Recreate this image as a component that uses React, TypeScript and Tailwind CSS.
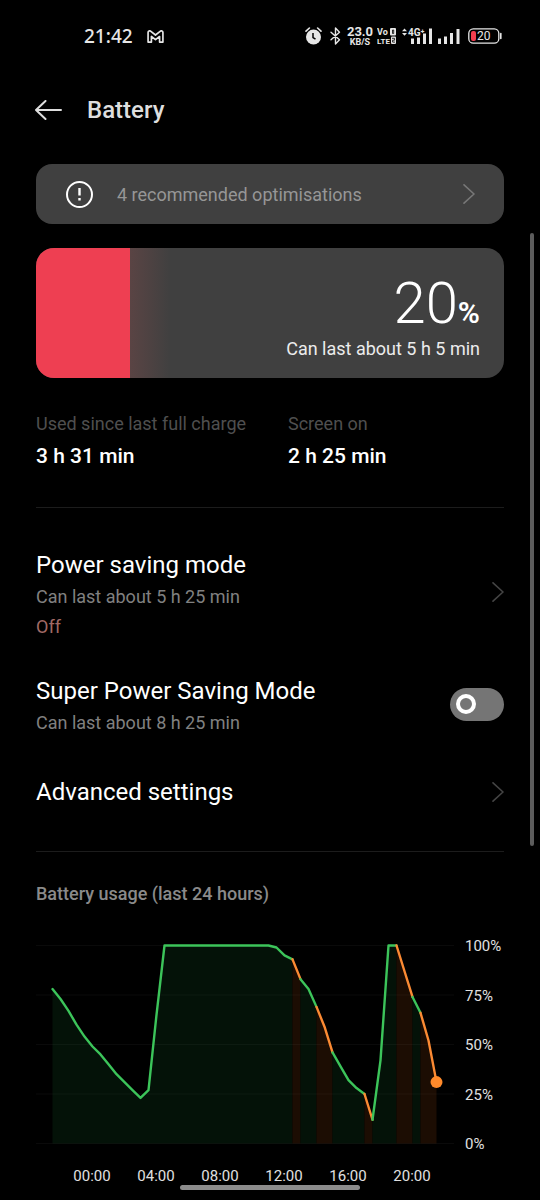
import { useState } from "react";

// battery level every half hour, starting at 21:30 the day before
const LEVELS = [
  78, 73, 67, 60, 54, 49, 45, 40, 35, 31, 27, 23, 27, 65,
  100, 100, 100, 100, 100, 100, 100, 100, 100, 100, 100, 100, 100, 100,
  99, 95, 93, 83, 78, 69, 59, 46, 39, 32, 28, 25, 12, 42, 100, 100,
  87, 74, 66, 52, 31,
];

const SEGMENTS = [
  { from: 0, to: 30, heavy: false },
  { from: 30, to: 31, heavy: true },
  { from: 31, to: 33, heavy: false },
  { from: 33, to: 35, heavy: true },
  { from: 35, to: 39, heavy: false },
  { from: 39, to: 40, heavy: true },
  { from: 40, to: 43, heavy: false },
  { from: 43, to: 45, heavy: true },
  { from: 45, to: 46, heavy: false },
  { from: 46, to: 48, heavy: true },
];

const HOURS = ["00:00", "04:00", "08:00", "12:00", "16:00", "20:00"];
const PERCENTS = [100, 75, 50, 25, 0];

const px = (i: number) => 16.5 + i * 8;
const py = (level: number) => 9.5 + (100 - level) * 1.98;

function Chevron({ className }: { className?: string }) {
  return (
    <svg width="12" height="20" viewBox="0 0 12 20" fill="none" stroke="currentColor" strokeWidth="1.6" strokeLinecap="round" strokeLinejoin="round" className={className} aria-hidden="true">
      <path d="M1 .8 11 10 1 19.2" />
    </svg>
  );
}

function StatusBar() {
  return (
    <div className="flex h-18 items-center justify-between pl-21 pr-[38px] text-[#e6e6e6]">
      <div className="flex items-center gap-3.5">
        <span className="font-['Noto_Sans',sans-serif] text-[19px] leading-6 font-medium">21:42</span>
        <svg width="17" height="13" viewBox="0 0 18 14" fill="none" stroke="currentColor" strokeWidth="1.8" strokeLinejoin="round" aria-label="Gmail">
          <path d="M1 13V2.6C1 1 2.8.4 4 1.4l5 4 5-4c1.2-1 3-.4 3 1.2V13h-3.600V7L9 10.400 4.600 7v6Z" />
        </svg>
      </div>

      <div className="flex items-center">
        <svg width="17" height="18" viewBox="0 0 17 18" className="mr-2" aria-label="Alarm">
          <circle cx="8.5" cy="10" r="7.5" fill="currentColor" />
          <path d="M1 4.200 4.400 1M16 4.200 12.600 1" stroke="currentColor" strokeWidth="1.6" strokeLinecap="round" />
          <path d="M8 6v4.500l2.500 1.700" stroke="#000" strokeWidth="1.5" fill="none" />
        </svg>
        <svg width="11" height="18" viewBox="0 0 11 18" fill="none" stroke="currentColor" strokeWidth="1.4" strokeLinejoin="round" strokeLinecap="round" className="mr-1.5" aria-label="Bluetooth">
          <path d="m1 5.200 8.500 7.500L5.500 17V1l4 4.300L1 12.800" />
        </svg>
        <div className="mr-1 flex w-[26px] flex-col items-center font-['Roboto',sans-serif] font-bold">
          <span className="text-[13px] leading-3">23.0</span>
          <span className="text-[9px] leading-2">KB/S</span>
        </div>
        <svg width="19" height="20" viewBox="0 -2 19 20" className="mr-1.5" fill="currentColor" fontFamily="Roboto, sans-serif" fontWeight="700" aria-label="VoLTE 2">
          <text x="0" y="7" fontSize="9">Vo</text>
          <text x="0" y="16" fontSize="8">LTE</text>
          <rect x="13" y="0" width="6" height="7.5" rx="1" />
          <rect x="14" y="8.5" width="5" height="7.5" rx="1" />
          <path d="M15.500 2v3.500h1.200V2Z" fill="none" stroke="#000" strokeWidth=".8" />
          <path d="M15 10.300h2.600v1.900h-2v1.900h2.400" fill="none" stroke="#000" strokeWidth=".8" />
        </svg>
        <svg width="30" height="20" viewBox="0 -2 30 20" className="mr-1.5" fill="currentColor" aria-label="4G signal">
          <path d="M0 3.200 2.500.5 5 3.200ZM0 5l2.500 2.700L5 5Z" />
          <text x="6" y="8" fontSize="10" fontFamily="Roboto, sans-serif" fontWeight="700">4G⁺</text>
          <path d="M9 10.500h3V16H9ZM15 9.500h3V16h-3ZM21 5.500h3V16h-3ZM27 .5h3V16h-3Z" />
        </svg>
        <svg width="22" height="16" viewBox="0 0 22 16" className="mr-2" fill="currentColor" aria-label="Signal">
          <path d="M0 10.500h3V16H0ZM6 8.500h3V16H6ZM12 5h3v11h-3ZM18.500 1h3v15h-3Z" />
        </svg>
        <svg width="34" height="16" viewBox="0 0 34 16" aria-label="Battery 20%">
          <rect x=".8" y=".8" width="30" height="14.4" rx="4.5" fill="none" stroke="currentColor" strokeWidth="1.3" />
          <path d="M32.800 5.500v5" stroke="currentColor" strokeWidth="1.6" strokeLinecap="round" />
          <rect x="3" y="3" width="5" height="10" rx="2" fill="#f03e50" />
          <text x="9" y="12.3" fontSize="12" fontFamily="Roboto, sans-serif" fontWeight="400" fill="currentColor">20</text>
        </svg>
      </div>
    </div>
  );
}

function UsageChart() {
  const last = LEVELS.length - 1;

  return (
    <div className="mt-7 flex">
      <div className="min-w-0 flex-1">
        <svg viewBox="0 0 418 218" className="block w-full" role="img" aria-label="Battery level over the last 24 hours">
          {SEGMENTS.map((s) => {
            const points = LEVELS.slice(s.from, s.to + 1).map((level, i) => `${px(s.from + i)} ${py(level)}`);
            return (
              <path
                key={s.from}
                d={`M${px(s.from)} ${py(0)}L${points.join("L")}V${py(0)}Z`}
                fill={s.heavy ? "#1c0d03" : "#041208"}
              />
            );
          })}
          {PERCENTS.map((p) => (
            <path key={p} d={`M0 ${py(p)}H418`} stroke="#fff" strokeOpacity=".04" strokeWidth="1" />
          ))}
          {SEGMENTS.map((s) => {
            const points = LEVELS.slice(s.from, s.to + 1).map((level, i) => `${px(s.from + i)} ${py(level)}`);
            return (
              <path
                key={s.from}
                d={`M${points.join("L")}`}
                fill="none"
                stroke={s.heavy ? "#fb8a33" : "#3cc45a"}
                strokeWidth="2.4"
                strokeLinecap="round"
                strokeLinejoin="round"
              />
            );
          })}
          <circle cx={px(last)} cy={py(LEVELS[last])} r="6" fill="#ff8a2b" />
        </svg>
        <div className="mt-3 grid grid-cols-6 pr-2.5 pl-6 text-center text-[15px] leading-5 text-[#e0e0e0]">
          {HOURS.map((h) => (
            <span key={h}>{h}</span>
          ))}
        </div>
      </div>
      <div className="flex w-[50px] flex-col justify-between pb-8 pl-[11px] text-[15px] leading-5 text-[#e0e0e0]">
        {PERCENTS.map((p) => (
          <span key={p}>{p}%</span>
        ))}
      </div>
    </div>
  );
}

export default function App() {
  const [superSaving, setSuperSaving] = useState(false);

  return (
    <div className="relative min-h-screen bg-black pb-3.5 font-['Roboto',sans-serif] text-white">
      <StatusBar />

      <header className="flex h-19 items-center gap-6 px-[35px]">
        <button type="button" aria-label="Back" className="text-[#dedede]">
          <svg width="28" height="20" viewBox="0 0 28 20" fill="none" stroke="currentColor" strokeWidth="2" strokeLinecap="round" strokeLinejoin="round">
            <path d="M10.500 1 1 10l9.500 9M1 10h25" />
          </svg>
        </button>
        <h1 className="text-2xl font-medium text-[#dedede]">Battery</h1>
      </header>

      <main className="px-9 pt-4">
        <button type="button" className="flex h-15 w-full items-center rounded-2xl bg-[#404040] pr-[29px] pl-[30px]">
          <svg width="27" height="27" viewBox="0 0 27 27" fill="none" stroke="#fff" strokeWidth="2" aria-hidden="true">
            <circle cx="13.5" cy="13.5" r="12.5" />
            <path d="M13.500 7v7.500M13.500 17v2.500" strokeWidth="2.4" />
          </svg>
          <span className="ml-6 flex-1 pt-0.5 text-left text-lg text-[#969696]">4 recommended optimisations</span>
          <Chevron className="text-[#777]" />
        </button>

        <section className="mt-6 flex h-[130px] overflow-hidden rounded-[18px] bg-[#404040]">
          <div className="w-1/5 bg-[#ee3f52]" />
          <div className="w-10 bg-linear-to-r from-[#5a4444] to-[#404040]" />
          <div className="flex flex-1 flex-col items-end pt-6 pr-6">
            <p className="flex items-baseline">
              <span className="text-[58px] leading-[62px] font-light">20</span>
              <span className="text-[30px] leading-8 font-semibold">%</span>
            </p>
            <p className="text-lg leading-[30px] text-[#ececec]">Can last about 5 h 5 min</p>
          </div>
        </section>

        <dl className="mt-8 grid grid-cols-2 gap-x-9">
          <div>
            <dt className="text-lg leading-7 text-[#4f4f4f]">Used since last full charge</dt>
            <dd className="mt-1 text-[21px] leading-7 font-medium">3 h 31 min</dd>
          </div>
          <div>
            <dt className="text-lg leading-7 text-[#4f4f4f]">Screen on</dt>
            <dd className="mt-1 text-[21px] leading-7 font-medium">2 h 25 min</dd>
          </div>
        </dl>

        <hr className="mt-[37px] border-[#1c1c1c]" />

        <button type="button" className="mt-[41px] flex w-full items-center justify-between text-left">
          <span>
            <span className="block text-2xl leading-8">Power saving mode</span>
            <span className="block text-lg leading-8 text-[#808080]">Can last about 5 h 25 min</span>
            <span className="block text-lg leading-7 text-[#a06a66]">Off</span>
          </span>
          <Chevron className="mb-1.5 text-[#444]" />
        </button>

        <label className="mt-[34px] flex items-center justify-between">
          <span>
            <span className="block text-2xl leading-8">Super Power Saving Mode</span>
            <span className="block text-lg leading-8 text-[#808080]">Can last about 8 h 25 min</span>
          </span>
          <input
            type="checkbox"
            role="switch"
            checked={superSaving}
            onChange={(e) => setSuperSaving(e.target.checked)}
            className="mb-1.5 flex h-[33px] w-[54px] appearance-none items-center rounded-full bg-[#757575] px-1.5 before:size-5 before:rounded-full before:border-4 before:border-white checked:justify-end checked:bg-[#3cc45a]"
          />
        </label>

        <button type="button" className="mt-[37px] flex w-full items-center justify-between text-left text-2xl leading-8">
          Advanced settings
          <Chevron className="text-[#444]" />
        </button>

        <hr className="mt-[43px] border-[#1c1c1c]" />

        <section>
          <h2 className="mt-7 text-lg leading-7 font-medium text-[#8a8a8a]">Battery usage (last 24 hours)</h2>
          <UsageChart />
        </section>
      </main>

      <div className="absolute top-[233px] right-1.5 h-[613px] w-1 rounded-full bg-[#5c5c5c]" />
      <div className="absolute inset-x-0 bottom-2.5 mx-auto h-[5px] w-1/3 rounded-full bg-[#8c8c8c]" />
    </div>
  );
}
